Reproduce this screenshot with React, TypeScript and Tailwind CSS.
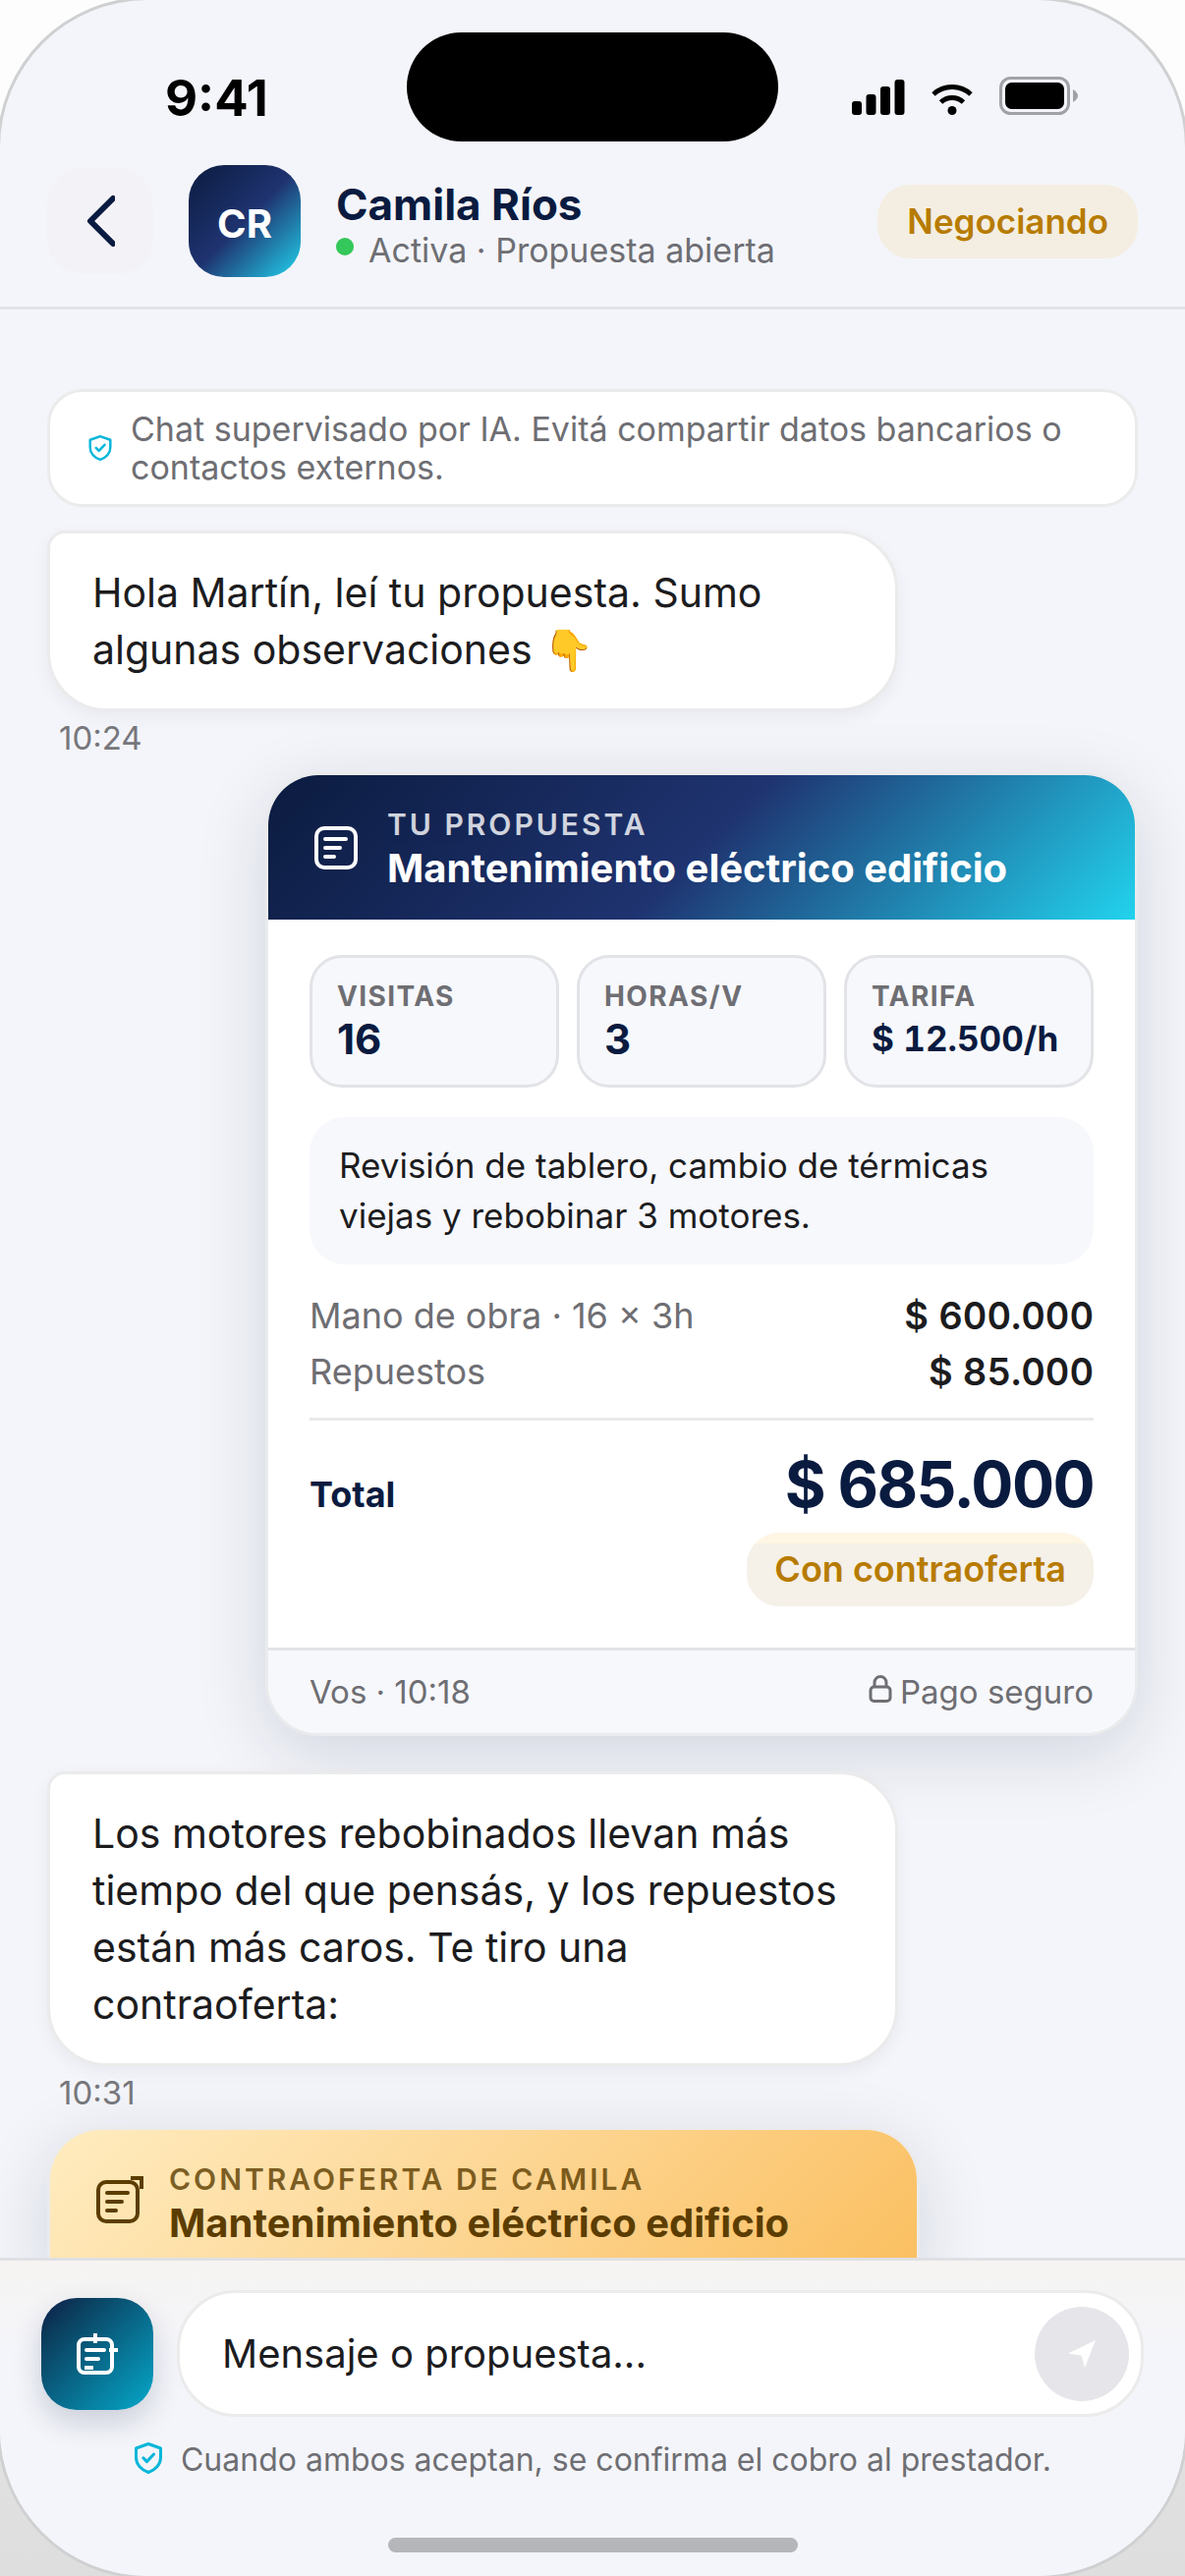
import type { ReactNode } from 'react'

interface Message {
  text: string
  time: string
}

const firstMessage: Message = {
  text: 'Hola Martín, leí tu propuesta. Sumo algunas observaciones 👇',
  time: '10:24',
}

const secondMessage: Message = {
  text: 'Los motores rebobinados llevan más tiempo del que pensás, y los repuestos están más caros. Te tiro una contraoferta:',
  time: '10:31',
}

const stats = [
  { label: 'VISITAS', value: '16', valueClass: 'text-[42px]' },
  { label: 'HORAS/V', value: '3', valueClass: 'text-[42px]' },
  { label: 'TARIFA', value: '$ 12.500/h', valueClass: 'text-[35px] tabular-nums' },
]

const costs = [
  { label: 'Mano de obra · 16 × 3h', amount: '$ 600.000' },
  { label: 'Repuestos', amount: '$ 85.000' },
]

function ShieldCheckIcon({ className }: { className: string }) {
  return (
    <svg viewBox="0 0 30 34" fill="none" stroke="#06b6d9" strokeLinecap="round" strokeLinejoin="round" className={className} aria-hidden="true">
      <path d="M15 2.5 L27.5 7 V16.5 C27.5 23.5 22 29 15 31.5 C8 29 2.5 23.5 2.5 16.5 V7 Z" strokeWidth="3" />
      <path d="M9.8 16.8 L13.4 20.6 L20.6 13" strokeWidth="3" />
    </svg>
  )
}

function ProposalIcon() {
  return (
    <svg viewBox="0 0 44 44" fill="none" stroke="currentColor" strokeWidth="4" strokeLinecap="round" className="size-11 shrink-0" aria-hidden="true">
      <rect x="2" y="2" width="40" height="40" rx="8" />
      <path d="M11 13 H32 M11 22 H26 M11 31 H20" />
    </svg>
  )
}

function CounterIcon() {
  return (
    <svg viewBox="0 0 44 48" fill="none" stroke="currentColor" strokeWidth="4" className="mb-1.5 h-12 w-11 shrink-0 overflow-visible" aria-hidden="true">
      <rect x="2" y="6" width="40" height="40" rx="8" />
      <path d="M11 17 H32 M11 26 H26 M11 35 H20" strokeLinecap="round" />
      <path d="M35 2 H46 V13" />
    </svg>
  )
}

function NewProposalIcon() {
  return (
    <svg viewBox="0 0 42 42" fill="none" stroke="#ffffff" strokeWidth="4" className="size-[42px]" aria-hidden="true">
      <rect x="2" y="6" width="34" height="34" rx="6" />
      <path d="M19 0 V10 M33 17 H42" />
      <path d="M10 17 H28 M10 26 H22" strokeLinecap="round" />
      <path d="M8 35 H17" />
    </svg>
  )
}

function StatusBar() {
  return (
    <div className="grid h-[165px] grid-cols-[1fr_378px_1fr] items-start">
      <span className="pt-[69px] pl-[168px] text-[51px] leading-[62px] font-bold text-black">9:41</span>
      <div className="mt-[33px] h-[111px] rounded-full bg-black" />
      <div className="flex items-end justify-end gap-[27px] pt-[78px] pr-[108px]">
        <svg viewBox="0 0 54 39" className="h-[39px] w-[54px]" aria-hidden="true">
          <rect x="0" y="25" width="10" height="14" rx="3" />
          <rect x="14.5" y="18" width="10" height="21" rx="3" />
          <rect x="29" y="10" width="10" height="29" rx="3" />
          <rect x="43.5" y="3" width="10" height="36" rx="3" />
        </svg>
        <svg viewBox="0 0 42 39" fill="none" stroke="#000000" strokeWidth="5" className="h-[39px] w-[42px]" aria-hidden="true">
          <path d="M2 18 A28 28 0 0 1 40 18" />
          <path d="M9.5 26 A17 17 0 0 1 32.5 26" />
          <circle cx="21" cy="34.5" r="4.5" fill="#000000" stroke="none" />
        </svg>
        <svg viewBox="0 0 81 39" className="h-[39px] w-[81px]" aria-hidden="true">
          <rect x="1.5" y="1.5" width="69" height="36" rx="10" fill="none" stroke="#a1a2a7" strokeWidth="3" />
          <rect x="6" y="6" width="60" height="27" rx="6.5" />
          <path d="M75 13 Q80 16 80 19.5 Q80 23 75 26 Z" fill="#a1a2a7" />
        </svg>
      </div>
    </div>
  )
}

function ChatHeader() {
  return (
    <header className="border-b-[3px] border-[#e2e3e7]">
      <StatusBar />
      <div className="flex items-center px-12 pt-[3px] pb-[30px]">
        <button type="button" aria-label="Volver" className="flex size-[108px] items-center justify-center rounded-[36px] bg-[#f3f2f7]">
          <svg viewBox="0 0 30 54" fill="none" stroke="#0a1b40" strokeWidth="6" strokeLinecap="round" strokeLinejoin="round" className="h-[54px] w-[30px]" aria-hidden="true">
            <path d="M28 4 L5 27 L28 50" />
          </svg>
        </button>
        <div className="ml-9 flex size-[114px] items-center justify-center rounded-[36px] bg-[linear-gradient(135deg,#0b1b3f,#1f3370_50%,#22d3ee)] pt-1.5 text-[40px] font-bold text-white">
          CR
        </div>
        <div className="ml-9 min-w-0 flex-1 pt-2">
          <h1 className="text-[44px] leading-[51px] font-bold text-[#0a1b40]">Camila Ríos</h1>
          <p className="flex items-center gap-[15px] text-[34px] leading-[42px] text-[#6e6e73]">
            <span className="mb-2 size-[18px] rounded-full bg-[#34c759]" />
            Activa · Propuesta abierta
          </p>
        </div>
        <span className="rounded-[33px] bg-[#f4eee2] px-[30px] py-4 text-[35px] leading-[43px] font-semibold text-[#b77b00]">Negociando</span>
      </div>
    </header>
  )
}

function Bubble({ message, className }: { message: Message; className: string }) {
  return (
    <div className={className}>
      <p className="w-[78%] rounded-[60px] rounded-tl-[18px] border-[3px] border-[#ebebec] bg-white px-[43px] py-[31px] text-[41px] leading-[58px] text-[#1c1c1e] shadow-[0_6px_18px_rgba(10,27,64,0.05)]">
        {message.text}
      </p>
      <time className="mt-2 block pl-3 text-[33px] leading-[39px] text-[#77777c]">{message.time}</time>
    </div>
  )
}

function CardHeader({ icon, label, title, className }: { icon: ReactNode; label: string; title: string; className: string }) {
  return (
    <div className={`flex h-[147px] items-center px-[47px] ${className}`}>
      {icon}
      <div className="pl-[30px]">
        <p className="text-[30px] leading-[42px] font-semibold tracking-widest opacity-80">{label}</p>
        <h2 className="text-[40px] leading-[48px] font-bold">{title}</h2>
      </div>
    </div>
  )
}

function ProposalCard() {
  return (
    <article className="mt-[15px] ml-auto w-[80%] overflow-hidden rounded-[54px] border-[3px] border-[#eaebed] bg-white shadow-[0_18px_72px_rgba(10,27,64,0.14)]">
      <CardHeader
        icon={<ProposalIcon />}
        label="TU PROPUESTA"
        title="Mantenimiento eléctrico edificio"
        className="bg-[linear-gradient(135deg,#0b1b3f,#1f3370_50%,#22d3ee)] text-white"
      />
      <div className="px-[42px] pt-9 pb-[42px]">
        <div className="grid grid-cols-3 gap-[18px]">
          {stats.map((stat) => (
            <div key={stat.label} className="h-[135px] rounded-[33px] border-[3px] border-[#e2e3e7] bg-[#f7f8fc] px-[25px] pt-[21px]">
              <p className="text-[28px] leading-9 font-bold tracking-wider text-[#6e6e73]">{stat.label}</p>
              <p className={`leading-[51px] font-bold text-[#0a1b40] ${stat.valueClass}`}>{stat.value}</p>
            </div>
          ))}
        </div>
        <p className="mt-[30px] rounded-[36px] bg-[#f7f8fc] px-[30px] py-6 text-[35px] leading-[51px] text-[#1c1c1e]">
          Revisión de tablero, cambio de térmicas viejas y rebobinar 3 motores.
        </p>
        <dl className="mt-6 border-b-[3px] border-[#e9e9eb] pb-[18px]">
          {costs.map((cost) => (
            <div key={cost.label} className="flex justify-between leading-[57px]">
              <dt className="text-[36px] text-[#6e6e73]">{cost.label}</dt>
              <dd className="text-[38px] font-semibold text-[#1c1c1e] tabular-nums">{cost.amount}</dd>
            </div>
          ))}
        </dl>
        <div className="mt-6 flex items-baseline justify-between font-bold text-[#0a1b40]">
          <span className="text-[36px] leading-[45px]">Total</span>
          <span className="text-[64px] leading-[81px] tracking-tight">$ 685.000</span>
        </div>
        <div className="mt-[9px] flex justify-end">
          <span className="rounded-[33px] bg-[linear-gradient(#fff5e3_11px,#f5f0e8_11px)] px-7 py-4 text-[36px] leading-[43px] font-semibold text-[#b77b00]">Con contraoferta</span>
        </div>
      </div>
      <footer className="flex items-center justify-between border-t-[3px] border-[#e2e3e7] bg-[#f7f8fc] px-[42px] py-[21px] text-[33px] leading-[42px] text-[#6e6e73]">
        <span>Vos · 10:18</span>
        <span className="flex items-center gap-2">
          <svg viewBox="0 0 24 28" fill="none" stroke="currentColor" strokeWidth="3" className="mb-1.5 h-7 w-6" aria-hidden="true">
            <rect x="2" y="12" width="20" height="14.5" rx="3.5" />
            <path d="M6 12 V7.5 A6 6 0 0 1 18 7.5 V12" />
          </svg>
          Pago seguro
        </span>
      </footer>
    </article>
  )
}

function Composer() {
  return (
    <footer className="border-t-[3px] border-[#dfe0e3] bg-[linear-gradient(#f6f4f2,#f4f5fa_90px)]">
      <form className="flex items-center gap-6 px-[42px] pt-[30px]" onSubmit={(e) => e.preventDefault()}>
        <button type="button" aria-label="Nueva propuesta" className="flex size-[114px] shrink-0 items-center justify-center rounded-[36px] bg-[linear-gradient(135deg,#10194a,#0b3a5a_18%,#05a8ca)] shadow-[0_12px_30px_rgba(10,27,64,0.18)]">
          <NewProposalIcon />
        </button>
        <div className="flex h-[129px] min-w-0 flex-1 items-center rounded-[60px] border-[3px] border-[#ebebec] bg-white pr-3 pl-[43px]">
          <input aria-label="Mensaje" placeholder="Mensaje o propuesta..." className="min-w-0 flex-1 bg-transparent text-[40px] outline-none placeholder:text-[#1c1c1e]" />
          <button type="submit" aria-label="Enviar" className="flex size-24 items-center justify-center rounded-full bg-[#e5e5ea]">
            <svg viewBox="0 0 28 28" fill="#ffffff" className="size-7" aria-hidden="true">
              <path d="M28 0 L0 13.5 L13.5 15.5 L17 28 Z" />
            </svg>
          </button>
        </div>
      </form>
      <p className="mt-[21px] flex items-center justify-center gap-[18px] text-[32px] leading-[45px] text-[#6e6e73]">
        <ShieldCheckIcon className="mb-1 h-[34px] w-[30px]" />
        Cuando ambos aceptan, se confirma el cobro al prestador.
      </p>
      <div className="mx-auto mt-[57px] mb-6 h-[15px] w-[417px] rounded-full bg-[#b5b6ba]" />
    </footer>
  )
}

export default function App() {
  return (
    <div className="h-screen overflow-hidden bg-[linear-gradient(#fdfdfd,#f7f7f7_50%,#dedede)] font-['Inter','Noto_Color_Emoji',sans-serif]">
      <div className="flex h-full flex-col overflow-hidden rounded-[150px] bg-[#f4f5fa] ring-3 ring-[#cfd0d2]">
        <ChatHeader />
        <main className="min-h-0 flex-1 overflow-hidden px-12 pt-[81px]">
          <div className="flex items-center gap-[18px] rounded-[36px] border-[3px] border-[#ebebec] bg-white py-[18px] pr-9 pl-[38px] text-[34px] leading-[39px] text-[#6e6e73]">
            <ShieldCheckIcon className="h-7 w-[26px] shrink-0" />
            <p>Chat supervisado por IA. Evitá compartir datos bancarios o contactos externos.</p>
          </div>
          <Bubble message={firstMessage} className="mt-6" />
          <ProposalCard />
          <Bubble message={secondMessage} className="mt-9" />
          <article className="mt-[15px] w-[80%] overflow-hidden rounded-t-[54px] border-[3px] border-[#eaebed] shadow-[0_18px_72px_rgba(10,27,64,0.14)]">
            <CardHeader
              icon={<CounterIcon />}
              label="CONTRAOFERTA DE CAMILA"
              title="Mantenimiento eléctrico edificio"
              className="bg-[linear-gradient(135deg,#ffecc0,#fdd898_45%,#fbbf60)] text-[#5c3d00]"
            />
          </article>
        </main>
        <Composer />
      </div>
    </div>
  )
}
